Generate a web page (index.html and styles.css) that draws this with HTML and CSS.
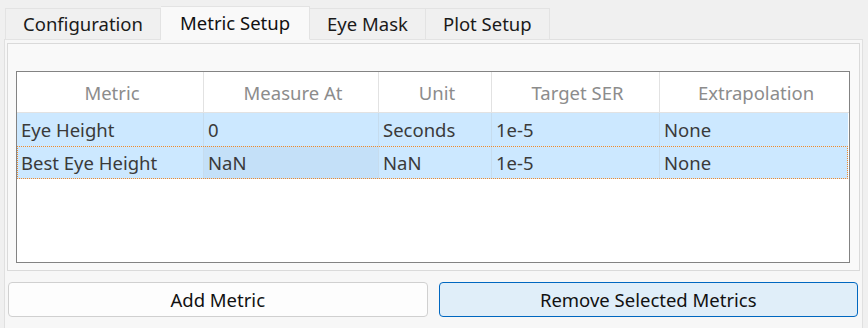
FILE: index.html
```html
<!DOCTYPE html>
<html lang="en">
<head>
    <meta charset="UTF-8">
    <title>Metric Setup</title>
    <link rel="stylesheet" href="styles.css">
</head>
<body>
    <div class="edge"></div>
    <div class="app">
        <!-- Tab strip -->
        <div class="tabs">
            <div class="tab">Configuration</div>
            <div class="tab active">Metric Setup</div>
            <div class="tab">Eye Mask</div>
            <div class="tab">Plot Setup</div>
        </div>

        <!-- Metric Setup page -->
        <div class="pane">
            <div class="frame">
                <div class="grid">
                    <div class="row head">
                        <div class="cell">Metric</div>
                        <div class="cell">Measure At</div>
                        <div class="cell">Unit</div>
                        <div class="cell">Target SER</div>
                        <div class="cell">Extrapolation</div>
                    </div>
                    <div class="row selected">
                        <div class="cell">Eye Height</div>
                        <div class="cell">0</div>
                        <div class="cell">Seconds</div>
                        <div class="cell">1e-5</div>
                        <div class="cell">None</div>
                    </div>
                    <div class="row selected focused">
                        <div class="cell">Best Eye Height</div>
                        <div class="cell current">NaN</div>
                        <div class="cell">NaN</div>
                        <div class="cell">1e-5</div>
                        <div class="cell">None</div>
                    </div>
                </div>
            </div>

            <div class="actions">
                <button class="btn">Add Metric</button>
                <button class="btn default">Remove Selected Metrics</button>
            </div>
        </div>
    </div>
</body>
</html>
```

FILE: styles.css
```css
/* Reset and base styles */
*,
*::before,
*::after {
    margin: 0;
    padding: 0;
    box-sizing: border-box;
}

body {
    font-family: 'Noto Sans', 'Open Sans', sans-serif;
    font-size: 18.5px;
    background: #f0f0f0;
    color: #1a1a1a;
    height: 100vh;
    overflow: hidden;
    display: flex;
}

/* Thin window edge on the left */
.edge {
    width: 1px;
    margin-left: 2px;
    background: #c9c9c9;
}

.app {
    flex: 1;
    margin-left: 2px;
    margin-right: 5px;
    display: flex;
    flex-direction: column;
}

/* Tab strip */
.tabs {
    display: flex;
    align-items: flex-end;
    height: 39px;
    padding-left: 1px;
    position: relative;
    z-index: 1;
}

.tab {
    height: 32px;
    padding: 0 17px 1px;
    display: flex;
    align-items: center;
    background: #f0f0f0;
    border: 1px solid #e3e3e3;
    border-left-width: 0;
    margin-bottom: -1px;
    white-space: nowrap;
}

.tab:first-child {
    border-left-width: 1px;
}

.tab.active {
    height: 34px;
    padding: 0 19px 2px;
    background: #f9f9f9;
    border-bottom-color: #f9f9f9;
    color: #111;
}

/* Tab page */
.pane {
    flex: 1;
    display: flex;
    flex-direction: column;
    background: #f7f7f7;
    border: 1px solid #e0e0e0;
    border-bottom: none;
    padding: 3px 0 0;
}

.frame {
    margin: 0 2px;
    background: #f9f9f9;
    border: 1px solid #dadada;
    padding: 27px 9px 7px 8px;
}

/* Metrics table */
.grid {
    height: 192px;
    background: #fff;
    border: 1px solid #838383;
    color: #3a3a3a;
}

.row {
    display: grid;
    grid-template-columns: 187px 175px 113px 168px 188px;
    height: 33px;
}

.row.head {
    height: 41px;
    border-bottom: 1px solid #e2e2e2;
    color: #8c8c8c;
}

.row.head .cell {
    justify-content: center;
    border-right: 1px solid #e2e2e2;
}

.row.head .cell:last-child {
    border-right: none;
}

.cell {
    display: flex;
    align-items: center;
    padding-left: 4px;
    white-space: nowrap;
    overflow: hidden;
}

.row.selected {
    background: #cce8ff;
    margin-right: 1px;
}

.row.selected .cell {
    border-right: 1px solid #c6dcee;
}

.row.selected .cell:last-child {
    border-right: none;
}

.row.focused {
    outline: 1px dotted #f08a2c;
    outline-offset: -1px;
}

.cell.current {
    background: #c4e0f8;
}

/* Bottom buttons */
.actions {
    display: flex;
    gap: 11px;
    padding: 11px 4px 0 3px;
}

.btn {
    flex: 1;
    height: 35px;
    font: inherit;
    color: #111;
    background: #fdfdfd;
    border: 1px solid #d0d0d0;
    border-radius: 4px;
}

.btn.default {
    background: #e0eef9;
    border-color: #0067c0;
}
```
